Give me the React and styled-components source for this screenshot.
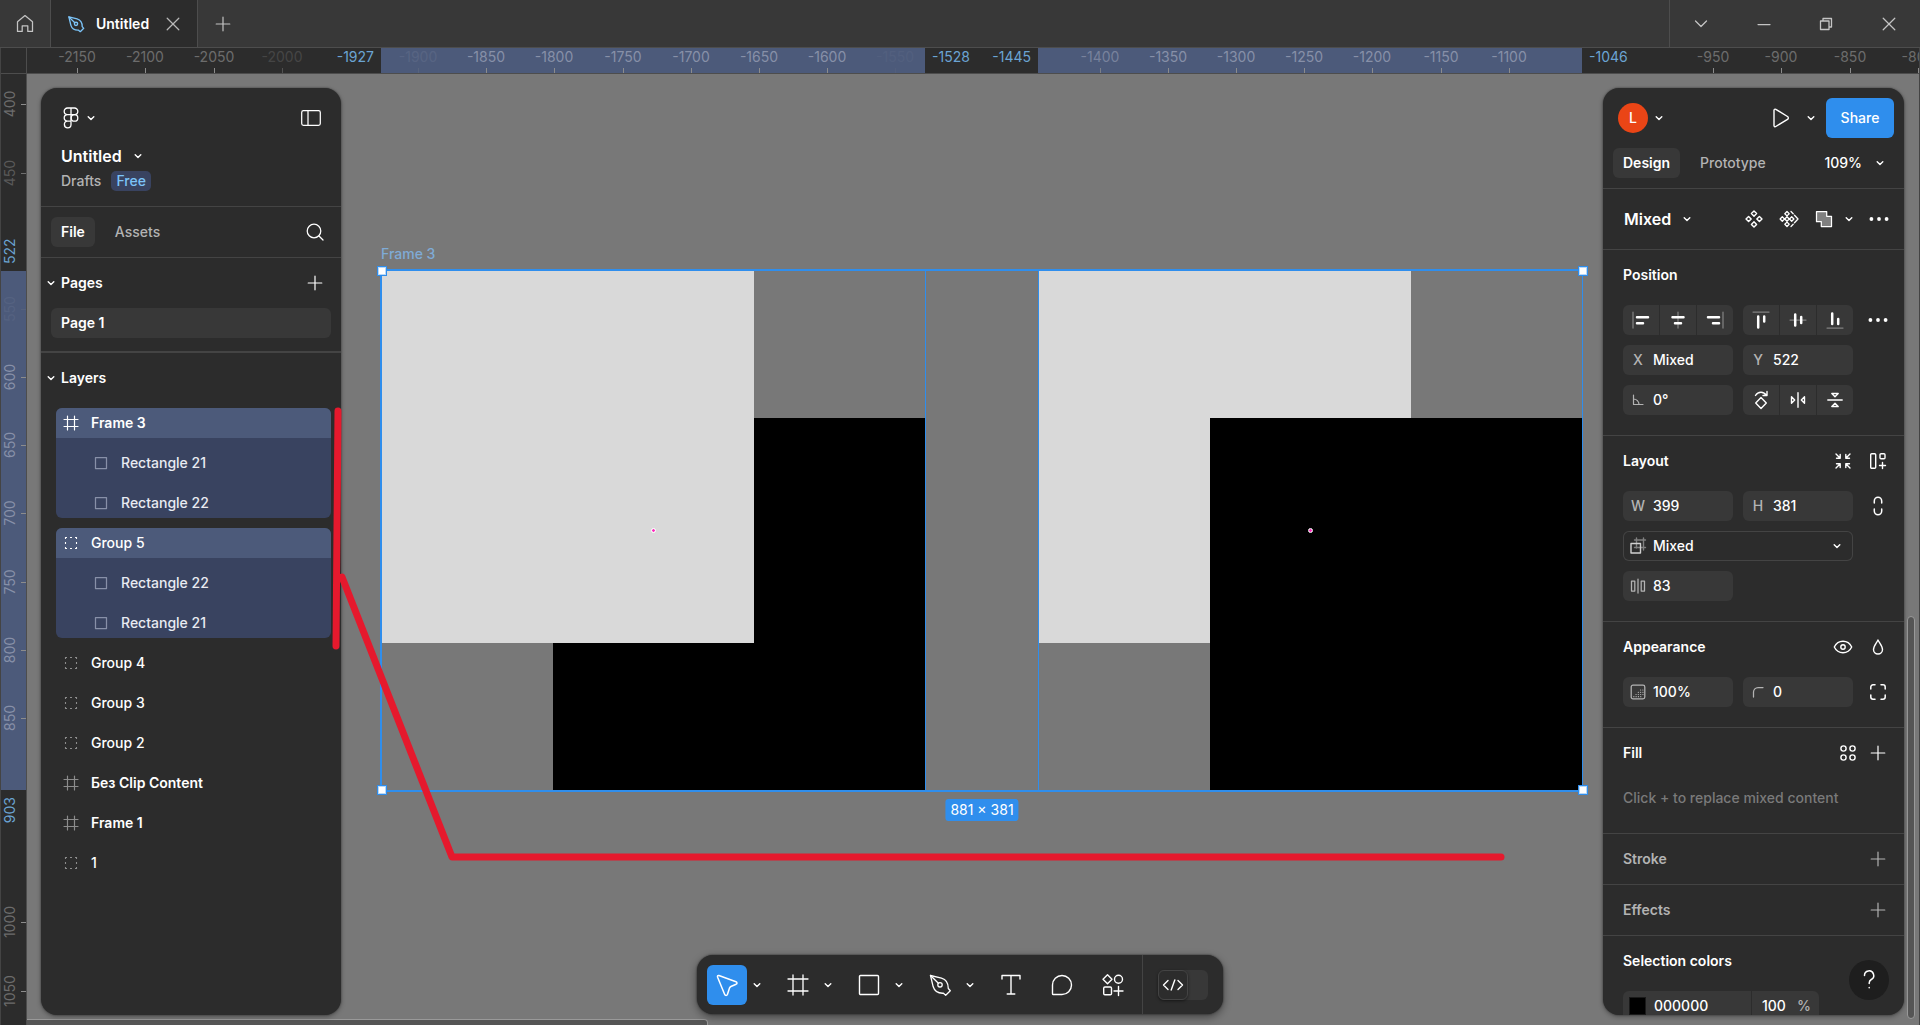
import React from "react";
import styled, { createGlobalStyle, css } from "styled-components";

const color = {
  panel: "#2c2c2c",
  bar: "#383838",
  line: "#444444",
  canvas: "#787878",
  blue: "#2f8eed",
  selStrong: "#4c5a7a",
  selWeak: "#394360",
  text: "#ffffff",
  muted: "#b3b3b3",
  faint: "#7a7a7a",
  red: "#e5192d",
};

const Global = createGlobalStyle`
  *, *::before, *::after { box-sizing: border-box; }
  html, body, #root { height: 100%; }
  body {
    margin: 0;
    overflow: hidden;
    background: ${color.canvas};
    color: ${color.text};
    font: 450 14px/20px Inter, "Noto Sans", sans-serif;
  }
  button, input, select {
    font: inherit;
    color: inherit;
    background: none;
    border: 0;
    padding: 0;
    margin: 0;
    min-width: 0;
  }
  svg { display: block; flex: none; fill: none; stroke: currentColor; }
`;

/* ---------- canvas geometry ---------- */

const SCALE = 1.3633;
const toX = (v) => 354.35 + (v + 1927) * SCALE;
const toY = (v) => 196.7 + (v - 522) * SCALE;

/* ---------- icons ---------- */

const Svg = ({ w = 24, h = w, sw = 1.25, children }) => (
  <svg width={w} height={h} viewBox={`0 0 ${w} ${h}`} strokeWidth={sw} strokeLinejoin="round" strokeLinecap="round" aria-hidden="true">
    {children}
  </svg>
);

const Chevron = () => <Svg w={10} sw={1.4}><path d="M2.200 3.700 5 6.500 7.800 3.700" /></Svg>;
const Plus = () => <Svg w={16} sw={1.2}><path d="M8 1.2v13.6M1.2 8h13.6" /></Svg>;
const HomeIcon = () => <Svg w={20}><path d="M2.5 7.8 10 1.6l7.500 6.200V17.400h-4.700v-5.600H7.200v5.600H2.500z" /></Svg>;
const NibIcon = ({ w }) => (
  <svg width={w} height={w} viewBox="0 0 24 24" strokeWidth={w > 20 ? 1.3 : 1.8} strokeLinejoin="round" strokeLinecap="round" aria-hidden="true">
    <path d="M2.500 2.500 13.500 5.200c4.500 1.300 6.800 5 6.800 10.300l2 2.300-4.600 4.400-2.300-2c-5.600.300-8.800-2-10.200-6.400z" />
    <path d="m2.500 2.500 7.900 7.700" />
    <circle cx="12" cy="11.800" r="2.200" />
  </svg>
);
const CloseIcon = () => <Svg w={14}><path d="m1.200 1.200 11.600 11.600M12.800 1.200 1.200 12.800" /></Svg>;
const WideChevron = () => <Svg w={14}><path d="m1.500 4 5.500 5.500L12.500 4" /></Svg>;
const MinimizeIcon = () => <Svg w={14}><path d="M1 7.500h12" /></Svg>;
const RestoreIcon = () => <Svg w={14} sw={1.300}><path d="M1.500 4h8.500v8.500H1.500zM4 4V1.500h8.500V10H10" /></Svg>;
const FigmaIcon = () => (
  <Svg w={16} h={22} sw={1.3}>
    <path d="M8 1H4.500a3.300 3.300 0 0 0 0 6.600H8zM8 1h3.500a3.300 3.300 0 0 1 0 6.600H8zM8 7.600H4.500a3.300 3.300 0 0 0 0 6.600H8zM8 14.200H4.500A3.300 3.300 0 1 0 8 17.500z" />
    <circle cx="11.500" cy="10.900" r="3.300" />
  </Svg>
);
const SidebarIcon = () => <Svg w={20} h={16}><rect x="0.700" y="0.700" width="18.600" height="14.600" rx="1.800" /><path d="M7 1v14" /></Svg>;
const SearchIcon = () => <Svg w={18}><circle cx="8" cy="8" r="6.800" /><path d="m13 13 4 4" /></Svg>;
const FrameIcon = () => <Svg w={16} sw={1.2}><path d="M4.500 1v14M11.500 1v14M1 4.500h14M1 11.500h14" /></Svg>;
const BigFrameIcon = () => <Svg sw={1.3}><path d="M7 2v20M17 2v20M2 6h20M2 18h20" /></Svg>;
const GroupIcon = () => (
  <svg width="16" height="16" viewBox="0 0 16 16" strokeWidth="1.100" aria-hidden="true">
    <path d="M2.500 4V2.500H4M7 2.500h2M12 2.500h1.500V4M13.500 7v2M13.500 12v1.500H12M9 13.500H7M4 13.500H2.500V12M2.500 9V7" />
  </svg>
);
const RectIcon = () => <Svg w={16}><path d="M2.500 2.500h11v11h-11z" /></Svg>;
const PlayIcon = () => <Svg w={20} sw={1.400}><path d="M3 2.300c0-1 .900-1.500 1.800-1L16.500 8.500c1.100.700 1.100 2.100 0 2.800L4.800 18.500c-.900.500-1.800 0-1.800-1z" /></Svg>;
const ComponentIcon = () => (
  <Svg w={20} sw={1.4}>
    <path d="m10 2 2.600 2.600L10 7.200 7.400 4.600zM10 12.800l2.600 2.600L10 18l-2.600-2.600zM4.600 7.400 7.200 10l-2.600 2.600L2 10zM15.400 7.400 18 10l-2.600 2.600-2.600-2.600z" />
  </Svg>
);
const VariantsIcon = () => (
  <Svg w={20} sw={1.300}>
    <path d="m8 2.500 2.200 2.200L8 6.900 5.800 4.700zM8 13.100l2.200 2.200L8 17.500l-2.200-2.200zM3.300 7.800 5.500 10l-2.200 2.200L1.100 10zM12.700 7.800l2.200 2.200-2.200 2.200-2.200-2.200zM8 7.800l2.200 2.200L8 12.200 5.800 10zM12 2.500l2.200 2.200M15.500 6.300 19 10l-3.500 3.700M14.200 15.300 12 17.500" />
  </Svg>
);
const UnionIcon = () => <Svg w={18}><path fill="#808080" d="M1.500 1.500h10.200v4.800h4.800v10.200H6.300v-4.800H1.500z" /></Svg>;
const DotsIcon = () => (
  <svg width="20" height="20" viewBox="0 0 20 20" aria-hidden="true">
    <g fill="currentColor" stroke="none"><circle cx="2.400" cy="10" r="1.900" /><circle cx="10" cy="10" r="1.900" /><circle cx="17.600" cy="10" r="1.900" /></g>
  </svg>
);
const AlignIcon = ({ rail, bars }) => (
  <svg width="20" height="20" viewBox="0 0 20 20" strokeLinecap="round" aria-hidden="true">
    <path stroke="#808080" strokeWidth="1.250" d={rail} />
    <path strokeWidth="2.500" d={bars} />
  </svg>
);
const ALIGN = [
  ["left", "M2 2v16", "M6 7.200h11M6 13.200h6"],
  ["horizontal centre", "M10 2v16", "M4.500 7.200h11M7 13.200h6"],
  ["right", "M18 2v16", "M3 7.200h11M8 13.200h6"],
  ["top", "M2 2h16", "M7.200 6.500v11M13.200 6.500v5"],
  ["vertical centre", "M2 10h16", "M7.200 4.500v11M13.200 7v6"],
  ["bottom", "M2 18h16", "M7.200 3.500v10.500M13.200 9v5"],
];
const AngleIcon = () => <Svg w={12} sw={1.200}><path d="M1.500 1v9.500H11M1.500 5a5.500 5.500 0 0 1 5.500 5.500" /></Svg>;
const RotateIcon = () => <Svg w={20} sw={1.400}><path d="m10 7.500 5.300 5.500L10 18.500 4.700 13zM4.500 5.500c2.500-4 8-4.500 11 0M16 1.500v4h-4" /></Svg>;
const FlipHIcon = () => <Svg w={20} sw={1.400}><path d="M10 2.800v14.400M3.500 6.800 6.700 10l-3.200 3.200zM16.500 6.800 13.300 10l3.200 3.200z" /></Svg>;
const FlipVIcon = () => <Svg w={20} sw={1.400}><path d="M2.800 10h14.400M6.800 3.500 10 6.700l3.200-3.200zM6.800 16.500 10 13.300l3.200 3.200z" /></Svg>;
const ShrinkIcon = () => <Svg w={18} sw={1.400}><path d="m2 2 4 4M6.200 2.500v3.700H2.500M16 2l-4 4M11.800 2.500v3.700h3.700M2 16l4-4M2.500 11.800h3.700v3.700M16 16l-4-4M15.500 11.800h-3.700v3.700" /></Svg>;
const AutoLayoutIcon = () => <Svg w={18} sw={1.400}><rect x="1.700" y="1.700" width="5" height="14.600" rx="1" /><rect x="11" y="1.700" width="5" height="5" rx="1" /><path d="M13.500 10.500v6M10.500 13.500h6" /></Svg>;
const LinkIcon = () => <Svg w={20} sw={1.500}><path d="M6.300 7V5a3.700 3.700 0 0 1 7.400 0v2M6.300 13v2a3.700 3.700 0 0 0 7.400 0v-2" /></Svg>;
const ResizeIcon = () => (
  <Svg w={18} sw={1.400}>
    <path stroke="#808080" d="M7.500 1v10M14.500 1v12M5.500 3h11M5.500 10.500h11" />
    <path stroke="#d0d0d0" d="M2 6.500h9.500V16H2z" />
  </Svg>
);
const GapIcon = () => <Svg w={16}><path d="M8 1v14M1.500 3h3.300v10H1.500zM11.200 3h3.300v10h-3.300z" /></Svg>;
const EyeIcon = () => <Svg w={20} sw={1.400}><path d="M1.300 10c1.700-3.500 4.900-5.700 8.700-5.700s7 2.200 8.700 5.700c-1.700 3.500-4.900 5.700-8.700 5.700S3 13.500 1.300 10z" /><circle cx="10" cy="10" r="2.200" /></Svg>;
const DropIcon = () => <Svg w={18} sw={1.400}><path d="M9 2C7.500 5 4.500 8 4.500 11.500a4.500 4.500 0 0 0 9 0C13.500 8 10.500 5 9 2z" /></Svg>;
const OpacityIcon = () => (
  <Svg w={16}>
    <rect x="1.200" y="1.200" width="13.600" height="13.600" rx="1.800" />
    <path strokeWidth="1.200" strokeDasharray="0.100 2.200" d="M3.800 12.700h9M6 10.500h7M8.300 8.300h5M10.500 6h2.500" />
  </Svg>
);
const RadiusIcon = () => <Svg w={12}><path d="M1.500 11V6A4.500 4.500 0 0 1 6 1.500h5" /></Svg>;
const CornersIcon = () => <Svg w={18} sw={1.500}><path d="M1.800 6V4a2.200 2.200 0 0 1 2.200-2.200h2M12 1.800h2A2.200 2.200 0 0 1 16.200 4v2M16.200 12v2a2.200 2.200 0 0 1-2.200 2.200h-2M6 16.200H4A2.200 2.200 0 0 1 1.800 14v-2" /></Svg>;
const StylesIcon = () => <Svg w={18} sw={1.400}><circle cx="4.500" cy="4.500" r="2.600" /><circle cx="13.500" cy="4.500" r="2.600" /><circle cx="4.500" cy="13.500" r="2.600" /><circle cx="13.500" cy="13.500" r="2.600" /></Svg>;
const PointerIcon = () => <Svg sw={1.500}><path d="M3.900 2.500 21 8.700c1.300.5 1.300 1.900.1 2.500l-5.200 2.300c-.6.3-1 .7-1.300 1.300l-2.200 6.800c-.5 1.300-2.200 1.300-2.700 0L2.600 4.200C2.200 3 2.800 2.100 3.900 2.500z" /></Svg>;
const ShapeIcon = () => <Svg sw={1.400}><rect x="2.500" y="2.500" width="19" height="19" rx="1" /></Svg>;
const TextIcon = () => <Svg sw={1.400}><path d="M3 6V2.500h18V6M12 2.500v18.500M8.200 21h7.600" /></Svg>;
const CommentIcon = () => <Svg sw={1.400}><path d="M3.300 21.500c-.5 0-.8-.3-.8-.8V12a9.500 9.500 0 1 1 9.500 9.500z" /></Svg>;
const ActionsIcon = () => (
  <Svg sw={1.400}>
    <path d="M6.500 1.700 11 6.200l-4.500 4.500L2 6.200zM17.500 13.500v9M13 18h9" />
    <circle cx="17.500" cy="6.200" r="4" />
    <rect x="2.700" y="14" width="7.800" height="7.800" rx="1.200" />
  </Svg>
);
const CodeIcon = () => <Svg w={22} h={20} sw={1.400}><path d="m6 5.500-4.500 4.500L6 14.500M16 5.500l4.500 4.500-4.500 4.500M12.800 5 9.200 15" /></Svg>;
const HelpIcon = () => <Svg w={20} h={22} sw={1.500}><path d="M5.500 6.500a4.600 4.600 0 1 1 6.800 4c-1.500.9-2.100 1.700-2.100 3.500v.5M10.200 18.500v.3" /></Svg>;

/* ---------- page ---------- */

const Page = styled.div`
  position: relative;
  display: flex;
  flex-direction: column;
  height: 100vh;
`;

const TabBar = styled.header`
  display: flex;
  align-items: stretch;
  height: 48px;
  background: ${color.bar};
  border-bottom: 1px solid #4d4d4d;
  color: #c4c4c4;
`;

const BarButton = styled.button`
  display: grid;
  place-items: center;
  width: 50px;
`;

const Tab = styled.div`
  display: flex;
  align-items: center;
  width: 148px;
  padding: 0 17px 0 16px;
  border: solid #4d4d4d;
  border-width: 0 1px;
  background: ${color.panel};
  color: #7cc4f8;
`;

const TabName = styled.span`
  flex: 1;
  margin-left: 11px;
  color: ${color.text};
  font-weight: 600;
`;

const TabClose = styled.button`
  color: #b8b8b8;
`;

const WindowControls = styled.div`
  display: grid;
  grid-template-columns: repeat(4, 1fr);
  width: 251px;
  margin-left: auto;
  border-left: 1px solid #4d4d4d;
`;

const WindowButton = styled.button`
  display: grid;
  place-items: center;
`;

const Workspace = styled.div`
  flex: 1;
  min-height: 0;
  display: grid;
  grid-template: 26px 1fr / 26px 1fr;
  border: solid ${color.line};
  border-width: 0 1px;
`;

/* ---------- rulers ---------- */

const RulerCorner = styled.div`
  background: ${color.panel};
  border: solid #4d4d4d;
  border-width: 0 1px 1px 0;
`;

const Ruler = styled.div`
  position: relative;
  overflow: hidden;
  background: ${color.panel};
  border: solid #4d4d4d;
  border-width: ${(p) => (p.$vertical ? "0 1px 0 0" : "0 0 1px")};
`;

const RulerSpan = styled.div`
  position: absolute;
  background: ${color.selStrong};
  ${(p) => (p.$vertical ? "left: 0; right: 0;" : "top: 0; bottom: 0;")}
`;

const Tick = styled.span`
  position: absolute;
  background: #8c8c8c;
  opacity: ${(p) => p.$opacity};
  ${(p) => (p.$vertical ? "right: 0; width: 5px; height: 1px;" : "bottom: 0; width: 1px; height: 5px;")}
`;

const tickText = {
  plain: "#6c6c6c",
  selected: "#8790a8",
  edge: "#6ba4d3",
};

const shift = { start: "0", center: "-50%", end: "-100%" };

const TickLabel = styled.span`
  position: absolute;
  font-weight: 400;
  font-size: 14px;
  line-height: 18px;
  white-space: nowrap;
  color: ${(p) => tickText[p.$tone]};
  opacity: ${(p) => p.$opacity};
  ${(p) =>
    p.$vertical
      ? css`
          left: 0;
          writing-mode: vertical-rl;
          transform: translateY(${shift[p.$anchor]}) rotate(180deg);
        `
      : css`
          top: 0;
          transform: translateX(${shift[p.$anchor]});
        `}
`;

const H_TICKS = [
  [-2150], [-2100], [-2050], [-2000, 0.4], [-1900, 0.2], [-1850], [-1800], [-1750], [-1700], [-1650], [-1600], [-1550, 0.1],
  [-1400, 0.75], [-1350], [-1300], [-1250], [-1200], [-1150], [-1100], [-950], [-900], [-850], [-800],
];
const H_SPANS = [[-1927, -1528], [-1445, -1046]];
const V_TICKS = [[400], [450, 0.7], [550, 0.15], [600], [650], [700], [750], [800], [850], [1000], [1050]];
const V_SPANS = [[522, 903]];

function Axis({ vertical, ticks, spans }) {
  const to = vertical ? toY : toX;
  const pos = (n) => (vertical ? { top: Math.round(n) } : { left: Math.round(n) });
  const size = (n) => (vertical ? { height: Math.round(n) } : { width: Math.round(n) });
  return (
    <Ruler $vertical={vertical}>
      {spans.map(([a, b]) => (
        <React.Fragment key={a}>
          <RulerSpan $vertical={vertical} style={{ ...pos(to(a)), ...size(to(b) - to(a)) }} />
          <TickLabel $vertical={vertical} $tone="edge" $anchor="end" $opacity={1} style={pos(to(a) - 7)}>{a}</TickLabel>
          <TickLabel $vertical={vertical} $tone="edge" $anchor="start" $opacity={1} style={pos(to(b) + 7)}>{b}</TickLabel>
        </React.Fragment>
      ))}
      {ticks.map(([v, opacity = 1]) => {
        const inside = spans.some(([a, b]) => v > a && v < b);
        return (
          <React.Fragment key={v}>
            <TickLabel $vertical={vertical} $tone={inside ? "selected" : "plain"} $anchor="center" $opacity={opacity} style={pos(to(v))}>{v}</TickLabel>
            <Tick $vertical={vertical} $opacity={opacity} style={pos(to(v))} />
          </React.Fragment>
        );
      })}
    </Ruler>
  );
}

/* ---------- canvas ---------- */

const Canvas = styled.main`
  position: relative;
  display: flex;
  justify-content: space-between;
  min-width: 0;
  min-height: 0;
  padding: 14px 15px 10px 14px;
  overflow: hidden;
  background: ${color.canvas};
`;

const Shape = styled.div`
  position: absolute;
  background: ${(p) => p.$fill};
`;

const Outline = styled.div`
  position: absolute;
  border: solid ${color.blue};
  border-width: 0 1px;
`;

const SelectionBox = styled.div`
  position: absolute;
  border: solid ${color.blue};
  border-width: 2px 1px 2px 2px;
`;

const Handle = styled.span`
  position: absolute;
  width: 10px;
  height: 10px;
  border: 1px solid ${color.blue};
  background: #fff;
  box-shadow: inset 0 0 0 1px #b9d9f8;
`;

const FrameName = styled.span`
  position: absolute;
  color: #7fabd6;
`;

const SizeBadge = styled.span`
  position: absolute;
  height: 22px;
  padding: 0 5px;
  border-radius: 3px;
  background: ${color.blue};
  font-weight: 400;
  line-height: 22px;
  white-space: nowrap;
  transform: translateX(-50%);
`;

const RotationDot = styled.i`
  position: absolute;
  width: 5px;
  height: 5px;
  border: 1px solid #fff;
  border-radius: 50%;
  background: radial-gradient(circle, #ff24bd 40%, #fbb3e6 100%);
`;

const ScrollThumb = styled.div`
  position: absolute;
  border: 1px solid #999;
  border-radius: 4px;
  background: #555;
  ${(p) =>
    p.$vertical
      ? "right: 4px; bottom: 6px; width: 8px; height: 403px;"
      : "left: 0; bottom: -2px; width: 681px; height: 8px; border-left: 0; border-radius: 0 4px 0 0;"}
`;

const box = (x, y, w, h) => {
  const left = Math.round(toX(x));
  const top = Math.round(toY(y));
  return { left, top, width: Math.round(toX(x + w)) - left, height: Math.round(toY(y + h)) - top };
};

const SHAPES = [
  { x: -1801, y: 630, fill: "#000000" },
  { x: -1927, y: 522, fill: "#d9d9d9" },
  { x: -1445, y: 522, fill: "#d9d9d9" },
  { x: -1319, y: 630, fill: "#000000" },
];

const outlineBox = (x) => {
  const b = box(x, 522, 399, 381);
  return { ...b, width: b.width + 1 };
};

function Artwork() {
  const all = box(-1927, 522, 881, 381);
  return (
    <>
      {SHAPES.map((s) => <Shape key={s.x} $fill={s.fill} style={box(s.x, s.y, 273, 273)} />)}
      {[-1927, -1445].map((x) => <Outline key={x} style={outlineBox(x)} />)}
      <SelectionBox style={{ left: all.left - 1, top: all.top - 2, width: all.width + 2, height: all.height + 4 }} />
      {[0, 1].map((i) => [0, 1].map((j) => (
        <Handle key={`${i}${j}`} style={{ left: all.left - 4 + i * all.width, top: all.top - 5 + j * all.height }} />
      )))}
      {[653, 1310].map((x) => <RotationDot key={x} style={{ left: x - 29, top: 454 }} />)}
      <FrameName style={{ left: all.left, top: all.top - 27 }}>Frame 3</FrameName>
      <SizeBadge style={{ left: all.left + Math.round(all.width / 2), top: all.top + all.height + 9 }}>881 × 381</SizeBadge>
    </>
  );
}

/* ---------- panels ---------- */

const Panel = styled.aside`
  position: relative;
  display: flex;
  flex-direction: column;
  width: ${(p) => p.$width};
  overflow: hidden;
  border-radius: 16px;
  background: ${color.panel};
  box-shadow: 0 0 2px rgba(0, 0, 0, 0.5), 0 2px 5px rgba(0, 0, 0, 0.3);
`;

const Block = styled.section`
  flex: none;
  padding: ${(p) => p.$pad || "0"};
  border-bottom: ${(p) => p.$rule || "1px"} solid ${color.line};
  &:last-of-type { border-bottom: 0; }
`;

const Line = styled.div`
  display: flex;
  align-items: center;
  height: ${(p) => p.$h || "30px"};
  gap: ${(p) => p.$gap || "0"};
  margin-top: ${(p) => p.$top || "0"};
  padding: ${(p) => p.$pad || "0"};
`;

const Push = styled.span`
  flex: 1;
`;

const IconButton = styled.button`
  display: grid;
  place-items: center;
  flex: none;
  width: ${(p) => p.$w || "30px"};
  height: 30px;
  color: ${(p) => (p.$dim ? color.muted : color.text)};
`;

const MenuButton = styled.button`
  display: flex;
  align-items: center;
  gap: ${(p) => p.$gap || "11px"};
  font-weight: ${(p) => (p.$title ? 600 : 450)};
  font-size: ${(p) => (p.$title ? "16px" : "14px")};
`;

const Muted = styled.span`
  color: ${color.muted};
`;

const Plan = styled.span`
  padding: 0 5px;
  border-radius: 5px;
  background: ${color.selWeak};
  color: #7cc4f8;
`;

const PanelTab = styled.button`
  height: 30px;
  padding: 0 10px;
  border-radius: 6px;
  background: ${(p) => (p.$active ? color.bar : "transparent")};
  color: ${(p) => (p.$active ? color.text : color.muted)};
  font-weight: ${(p) => (p.$active ? 600 : 450)};
`;

const Heading = styled.h2`
  flex: 1;
  margin: 0;
  font-size: 14px;
  font-weight: 600;
  color: ${(p) => (p.$dim ? color.muted : color.text)};
`;

const FoldButton = styled.button`
  display: grid;
  place-items: center;
  width: 20px;
  height: 30px;
`;

const PageItem = styled.button`
  display: block;
  width: 280px;
  height: 30px;
  margin: 0 10px;
  padding: 0 10px;
  border-radius: 6px;
  background: ${color.bar};
  font-weight: 600;
  text-align: left;
`;

const LayerTree = styled.div`
  display: grid;
  gap: 10px;
  padding: 5px 10px 10px 15px;
`;

const LayerGroup = styled.div`
  display: grid;
  gap: 10px;
  overflow: hidden;
  border-radius: 6px;
  background: ${(p) => (p.$selected ? color.selWeak : "transparent")};
`;

const LayerRow = styled.button`
  display: flex;
  align-items: center;
  gap: 12px;
  height: 30px;
  padding-left: ${(p) => (p.$child ? "37px" : "7px")};
  background: ${(p) => (p.$selected ? color.selStrong : "transparent")};
  font-weight: ${(p) => (p.$strong ? 600 : 450)};
  text-align: left;
  color: ${(p) => (p.$child ? "#e9ebf2" : color.text)};
  svg { color: ${(p) => (p.$selected ? color.text : p.$child ? "#8890a8" : "#8c8c8c")}; }
`;

const layerIcons = { frame: FrameIcon, group: GroupIcon, rect: RectIcon };

const LAYERS = [
  { name: "Frame 3", kind: "frame", strong: true, children: ["Rectangle 21", "Rectangle 22"] },
  { name: "Group 5", kind: "group", children: ["Rectangle 22", "Rectangle 21"] },
  { name: "Group 4", kind: "group" },
  { name: "Group 3", kind: "group" },
  { name: "Group 2", kind: "group" },
  { name: "Без Clip Content", kind: "frame", strong: true },
  { name: "Frame 1", kind: "frame", strong: true },
  { name: "1", kind: "group" },
];

function LeftPanel() {
  return (
    <Panel $width="300px">
      <Block $pad="10px 10px 15px 20px">
        <Line $h="40px" $pad="0 5px 0 2px">
          <MenuButton $gap="7px" aria-label="Main menu"><FigmaIcon /><Chevron /></MenuButton>
          <Push />
          <IconButton aria-label="Minimize UI"><SidebarIcon /></IconButton>
        </Line>
        <Line $h="20px" $top="8px"><MenuButton $title>Untitled<Chevron /></MenuButton></Line>
        <Line $h="20px" $top="5px" $gap="10px"><Muted>Drafts</Muted><Plan>Free</Plan></Line>
      </Block>
      <Block>
        <Line $h="50px" $gap="10px" $pad="0 11px 0 10px">
          <PanelTab $active>File</PanelTab>
          <PanelTab>Assets</PanelTab>
          <Push />
          <IconButton aria-label="Find"><SearchIcon /></IconButton>
        </Line>
      </Block>
      <Block $rule="2px" $pad="0 0 13px">
        <Line $h="50px" $pad="0 11px 0 0">
          <FoldButton aria-label="Collapse pages"><Chevron /></FoldButton>
          <Heading>Pages</Heading>
          <IconButton aria-label="Add page"><Plus /></IconButton>
        </Line>
        <PageItem>Page 1</PageItem>
      </Block>
      <Block>
        <Line $h="50px">
          <FoldButton aria-label="Collapse layers"><Chevron /></FoldButton>
          <Heading>Layers</Heading>
        </Line>
        <LayerTree>
          {LAYERS.map(({ name, kind, strong, children }) => {
            const Icon = layerIcons[kind];
            return (
              <LayerGroup key={name} $selected={!!children}>
                <LayerRow $selected={!!children} $strong={strong}><Icon />{name}</LayerRow>
                {children && children.map((c) => <LayerRow key={c} $child><RectIcon />{c}</LayerRow>)}
              </LayerGroup>
            );
          })}
        </LayerTree>
      </Block>
    </Panel>
  );
}

const Avatar = styled.span`
  display: grid;
  place-items: center;
  width: 30px;
  height: 30px;
  border-radius: 50%;
  background: #ea4516;
`;

const ShareButton = styled.button`
  width: 68px;
  height: 40px;
  margin-left: 5px;
  border-radius: 6px;
  background: ${color.blue};
  font-weight: 550;
`;

const Grid = styled.div`
  display: grid;
  grid-template-columns: 1fr 1fr 30px;
  gap: 10px;
  padding: 5px 11px 20px 20px;
`;

const ButtonGroup = styled.div`
  display: grid;
  grid-template-columns: repeat(3, 1fr);
  gap: 1px;
  height: 30px;
  overflow: hidden;
  border-radius: 6px;
`;

const GroupButton = styled.button`
  display: grid;
  place-items: center;
  background: ${color.bar};
`;

const FieldBox = styled.label`
  display: flex;
  align-items: center;
  height: 30px;
  border-radius: 6px;
  background: ${color.bar};
`;

const FieldMark = styled.span`
  display: grid;
  place-items: center;
  flex: none;
  width: 30px;
  color: ${color.muted};
`;

const FieldInput = styled.input`
  flex: 1;
  width: 100%;
  outline: 0;
`;

const SelectBox = styled.label`
  grid-column: 1 / 3;
  display: flex;
  align-items: center;
  height: 30px;
  padding-right: 11px;
  border-radius: 6px;
  box-shadow: inset 0 0 0 1px ${color.line};
`;

const SelectInput = styled.select`
  flex: 1;
  appearance: none;
  outline: 0;
`;

const Filler = styled.span`
  grid-column: ${(p) => p.$span || "auto"};
`;

const Hint = styled.p`
  height: 30px;
  margin: 5px 20px 20px;
  color: ${color.faint};
  line-height: 30px;
`;

const ColorRow = styled.div`
  display: flex;
  gap: 1px;
  width: 196px;
  height: 30px;
  margin: 5px 0 10px 20px;
  overflow: hidden;
  border-radius: 6px;
`;

const ColorCell = styled.label`
  display: flex;
  align-items: center;
  flex: ${(p) => p.$flex};
  min-width: 0;
  padding: ${(p) => p.$pad};
  background: ${color.bar};
`;

const Swatch = styled.span`
  flex: none;
  width: 17px;
  height: 18px;
  margin-right: 8px;
  border: 1px solid #1a1a1a;
  background: #000;
`;

const HelpButton = styled.button`
  position: absolute;
  right: 15px;
  bottom: 15px;
  display: grid;
  place-items: center;
  width: 40px;
  height: 40px;
  border-radius: 50%;
  background: #1e1e1e;
`;

const Field = ({ mark, label, value }) => (
  <FieldBox>
    <FieldMark>{mark}</FieldMark>
    <FieldInput aria-label={label} defaultValue={value} />
  </FieldBox>
);

const SectionHead = ({ title, dim, gap, children }) => (
  <Line $h="50px" $gap={gap} $pad="0 11px 0 20px">
    <Heading $dim={dim}>{title}</Heading>
    {children}
  </Line>
);

const alignButton = ([name, rail, bars]) => (
  <GroupButton key={name} aria-label={`Align ${name}`}><AlignIcon rail={rail} bars={bars} /></GroupButton>
);

function RightPanel() {
  return (
    <Panel $width="301px">
      <Block $pad="10px">
        <Line $h="40px" $pad="0 0 0 5px">
          <MenuButton $gap="6px" aria-label="Account"><Avatar>L</Avatar><Chevron /></MenuButton>
          <Push />
          <IconButton $w="40px" aria-label="Present"><PlayIcon /></IconButton>
          <IconButton $w="20px" aria-label="Present options"><Chevron /></IconButton>
          <ShareButton>Share</ShareButton>
        </Line>
        <Line $top="10px" $gap="10px" $pad="0 9px 0 0">
          <PanelTab $active>Design</PanelTab>
          <PanelTab>Prototype</PanelTab>
          <Push />
          <MenuButton $gap="13px">109%<Chevron /></MenuButton>
        </Line>
      </Block>
      <Block>
        <Line $h="60px" $gap="5px" $pad="0 5px 0 21px">
          <MenuButton $title>Mixed<Chevron /></MenuButton>
          <Push />
          <IconButton aria-label="Create component"><ComponentIcon /></IconButton>
          <IconButton aria-label="Create component set"><VariantsIcon /></IconButton>
          <IconButton aria-label="Union"><UnionIcon /></IconButton>
          <IconButton $w="10px" aria-label="Boolean options"><Chevron /></IconButton>
          <IconButton $w="40px" aria-label="More actions"><DotsIcon /></IconButton>
        </Line>
      </Block>
      <Block>
        <SectionHead title="Position" />
        <Grid>
          <ButtonGroup>{ALIGN.slice(0, 3).map(alignButton)}</ButtonGroup>
          <ButtonGroup>{ALIGN.slice(3).map(alignButton)}</ButtonGroup>
          <IconButton aria-label="More options"><DotsIcon /></IconButton>
          <Field mark="X" label="X position" value="Mixed" />
          <Field mark="Y" label="Y position" value="522" />
          <Filler />
          <Field mark={<AngleIcon />} label="Rotation" value="0°" />
          <ButtonGroup>
            <GroupButton aria-label="Rotate 90° right"><RotateIcon /></GroupButton>
            <GroupButton aria-label="Flip horizontal"><FlipHIcon /></GroupButton>
            <GroupButton aria-label="Flip vertical"><FlipVIcon /></GroupButton>
          </ButtonGroup>
        </Grid>
      </Block>
      <Block>
        <SectionHead title="Layout" gap="5px">
          <IconButton aria-label="Resize to fit"><ShrinkIcon /></IconButton>
          <IconButton aria-label="Use auto layout"><AutoLayoutIcon /></IconButton>
        </SectionHead>
        <Grid>
          <Field mark="W" label="Width" value="399" />
          <Field mark="H" label="Height" value="381" />
          <IconButton aria-label="Lock aspect ratio"><LinkIcon /></IconButton>
          <SelectBox>
            <FieldMark><ResizeIcon /></FieldMark>
            <SelectInput aria-label="Resizing" defaultValue="Mixed"><option>Mixed</option></SelectInput>
            <Chevron />
          </SelectBox>
          <Filler />
          <Field mark={<GapIcon />} label="Horizontal spacing" value="83" />
        </Grid>
      </Block>
      <Block>
        <SectionHead title="Appearance" gap="5px">
          <IconButton aria-label="Toggle visibility"><EyeIcon /></IconButton>
          <IconButton aria-label="Blend mode"><DropIcon /></IconButton>
        </SectionHead>
        <Grid>
          <Field mark={<OpacityIcon />} label="Opacity" value="100%" />
          <Field mark={<RadiusIcon />} label="Corner radius" value="0" />
          <IconButton aria-label="Individual corners"><CornersIcon /></IconButton>
        </Grid>
      </Block>
      <Block>
        <SectionHead title="Fill">
          <IconButton aria-label="Fill styles"><StylesIcon /></IconButton>
          <IconButton aria-label="Add fill"><Plus /></IconButton>
        </SectionHead>
        <Hint>Click + to replace mixed content</Hint>
      </Block>
      <Block>
        <SectionHead title="Stroke" dim><IconButton $dim aria-label="Add stroke"><Plus /></IconButton></SectionHead>
      </Block>
      <Block>
        <SectionHead title="Effects" dim><IconButton $dim aria-label="Add effect"><Plus /></IconButton></SectionHead>
      </Block>
      <Block>
        <SectionHead title="Selection colors" />
        <ColorRow>
          <ColorCell $flex="0 0 128px" $pad="0 0 0 6px">
            <Swatch />
            <FieldInput aria-label="Hex colour" defaultValue="000000" />
          </ColorCell>
          <ColorCell $flex="1" $pad="0 8px 0 10px">
            <FieldInput aria-label="Colour opacity" defaultValue="100" />
            <Muted>%</Muted>
          </ColorCell>
        </ColorRow>
      </Block>
      <HelpButton aria-label="Help"><HelpIcon /></HelpButton>
    </Panel>
  );
}

/* ---------- toolbar ---------- */

const ToolbarDock = styled.div`
  position: absolute;
  right: 0;
  bottom: 11px;
  left: 0;
  display: flex;
  justify-content: center;
  pointer-events: none;
`;

const ToolbarBox = styled.nav`
  display: flex;
  height: 59px;
  border-radius: 16px;
  background: ${color.panel};
  box-shadow: 0 0 2px rgba(0, 0, 0, 0.7), 0 3px 8px rgba(0, 0, 0, 0.45);
  pointer-events: auto;
`;

const Tools = styled.div`
  display: flex;
  align-items: center;
  gap: 11px;
  padding: 0 9px 0 10px;
`;

const ToolPair = styled.div`
  display: flex;
  align-items: center;
`;

const Tool = styled.button`
  display: grid;
  place-items: center;
  width: 40px;
  height: 40px;
  border-radius: 6px;
  background: ${(p) => (p.$active ? color.blue : "transparent")};
`;

const ModeArea = styled.div`
  display: flex;
  align-items: center;
  padding: 0 15px;
  border-left: 1px solid ${color.line};
`;

const ModeSwitch = styled.button`
  display: flex;
  width: 50px;
  height: 30px;
  border-radius: 6px;
  background: ${color.bar};
`;

const ModeKnob = styled.span`
  display: grid;
  place-items: center;
  width: 30px;
  height: 30px;
  border: 1px solid ${color.line};
  border-radius: 6px;
  background: ${color.panel};
  box-shadow: 0 1px 3px rgba(0, 0, 0, 0.5);
`;

const TOOLS = [
  ["Move", <PointerIcon />, true],
  ["Frame", <BigFrameIcon />, true],
  ["Rectangle", <ShapeIcon />, true],
  ["Pen", <NibIcon w={24} />, true],
  ["Text", <TextIcon />],
  ["Comment", <CommentIcon />],
  ["Actions", <ActionsIcon />],
];

const Toolbar = () => (
  <ToolbarDock>
    <ToolbarBox>
      <Tools>
        {TOOLS.map(([name, icon, menu], i) => (
          <ToolPair key={name}>
            <Tool $active={i === 0} aria-label={name}>{icon}</Tool>
            {menu && <IconButton $w="20px" aria-label={`${name} tools`}><Chevron /></IconButton>}
          </ToolPair>
        ))}
      </Tools>
      <ModeArea>
        <ModeSwitch aria-label="Dev Mode"><ModeKnob><CodeIcon /></ModeKnob></ModeSwitch>
      </ModeArea>
    </ToolbarBox>
  </ToolbarDock>
);

/* ---------- hand-drawn callout ---------- */

const Callout = styled.svg`
  position: absolute;
  top: 0;
  left: 0;
  width: 100%;
  height: 100%;
  pointer-events: none;
`;

export default function App() {
  return (
    <Page>
      <Global />
      <TabBar>
        <BarButton aria-label="Home"><HomeIcon /></BarButton>
        <Tab>
          <NibIcon w={18} />
          <TabName>Untitled</TabName>
          <TabClose aria-label="Close tab"><CloseIcon /></TabClose>
        </Tab>
        <BarButton aria-label="New tab"><Plus /></BarButton>
        <WindowControls>
          <WindowButton aria-label="Tab list"><WideChevron /></WindowButton>
          <WindowButton aria-label="Minimize"><MinimizeIcon /></WindowButton>
          <WindowButton aria-label="Restore"><RestoreIcon /></WindowButton>
          <WindowButton aria-label="Close"><CloseIcon /></WindowButton>
        </WindowControls>
      </TabBar>
      <Workspace>
        <RulerCorner />
        <Axis ticks={H_TICKS} spans={H_SPANS} />
        <Axis vertical ticks={V_TICKS} spans={V_SPANS} />
        <Canvas>
          <Artwork />
          <ScrollThumb />
          <ScrollThumb $vertical />
          <LeftPanel />
          <RightPanel />
        </Canvas>
      </Workspace>
      <Toolbar />
      <Callout strokeWidth="7" strokeLinecap="round" strokeLinejoin="round" aria-hidden="true">
        <path stroke={color.red} d="M338 411 336 646M342 577 452 857H1501" />
      </Callout>
    </Page>
  );
}
